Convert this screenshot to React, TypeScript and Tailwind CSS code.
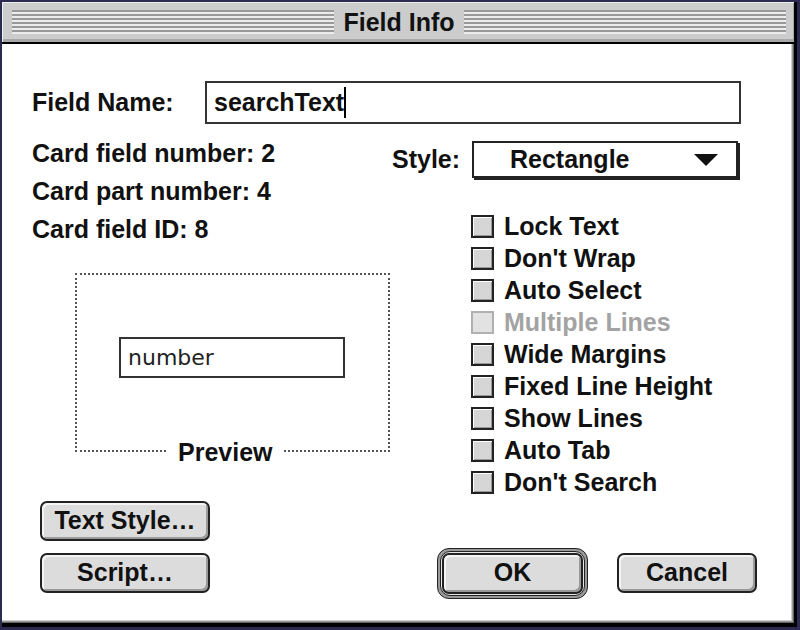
import React from 'react';

const checks = [
  { label: 'Lock Text' },
  { label: "Don't Wrap" },
  { label: 'Auto Select' },
  { label: 'Multiple Lines', disabled: true },
  { label: 'Wide Margins' },
  { label: 'Fixed Line Height' },
  { label: 'Show Lines' },
  { label: 'Auto Tab' },
  { label: "Don't Search" },
];

function Stripes() {
  return (
    <div className="flex-1 flex flex-col shadow-[inset_1px_1px_0_#f4f4f4]">
      {[0, 1, 2, 3, 4, 5].map(i => (
        <div key={i} className="h-[4px] border-t-2 border-[#999] bg-[#ececec]" />
      ))}
    </div>
  );
}

function MacButton({ label, className }: { label: string; className?: string }) {
  return (
    <div
      className={
        'flex items-center justify-center rounded-[7px] border-2 border-[#222] bg-[#dcdcdc] shadow-[inset_2px_2px_0_#f4f4f4,inset_-2px_-2px_0_#9a9a9a] ' +
        (className ?? '')
      }
    >
      {label}
    </div>
  );
}

function Checkbox({ label, disabled }: { label: string; disabled?: boolean }) {
  return (
    <div className="h-[32px] flex items-center gap-[10px]">
      {disabled ? (
        <div className="w-[23px] h-[23px] border-2 border-[#b0b0b0] bg-[#e2e2e2]" />
      ) : (
        <div className="w-[23px] h-[23px] border-2 border-[#222] bg-[#d6d6d6] shadow-[inset_1px_1px_0_#fff,inset_-1px_-1px_0_#999]" />
      )}
      <span className={disabled ? 'text-[#a3a3a3]' : ''}>{label}</span>
    </div>
  );
}

export default function App() {
  return (
    <div className="w-[800px] h-[630px] bg-[#2c2a50] pl-[2px] pt-[2px] pr-[3px] pb-[3px] font-['Liberation_Sans',Arial,sans-serif] font-bold text-[25px] text-[#111] overflow-hidden">
      <div className="h-full flex flex-col border-r-[3px] border-b-[4px] border-black">
        {/* title bar */}
        <div className="h-[42px] shrink-0 flex items-center pl-[10px] pr-[8px] bg-[#cccccc] border-b-2 border-black shadow-[inset_1px_1px_0_#eeeeee,inset_-1px_-3px_0_#a8a8a8]">
          <Stripes />
          <div className="px-[9px] leading-none">Field Info</div>
          <Stripes />
        </div>

        {/* content */}
        <div className="flex-1 bg-white pl-[30px] shadow-[inset_-1px_-1px_0_#666,inset_-2px_-2px_0_#999,inset_-3px_-3px_0_#cfcfcf]">
          <div className="mt-[37px] flex items-center">
            <div className="w-[173px]">Field Name:</div>
            <div className="w-[536px] h-[43px] border-2 border-[#333] flex items-center pl-[7px]">
              <span>searchText</span>
              <span className="w-[2px] h-[31px] bg-black" />
            </div>
          </div>

          <div className="mt-[10px] flex">
            {/* left column */}
            <div className="w-[360px] flex flex-col">
              <div className="leading-[38px]">Card field number: 2</div>
              <div className="leading-[38px]">Card part number: 4</div>
              <div className="leading-[38px]">Card field ID: 8</div>

              <div className="relative mt-[25px] ml-[43px] w-[315px] h-[179px] border-2 border-dotted border-[#555]">
                <div className="mt-[62px] ml-[42px] w-[226px] h-[41px] border-2 border-[#333] flex items-center pl-[7px] font-['DejaVu_Sans',Verdana,sans-serif] font-normal text-[22px] text-[#222]">
                  number
                </div>
                <div className="absolute left-[91px] bottom-[-16px] bg-white px-[10px] leading-[28px]">Preview</div>
              </div>

              <MacButton label="Text Style…" className="mt-[49px] ml-[8px] w-[170px] h-[40px]" />
              <MacButton label="Script…" className="mt-[12px] ml-[8px] w-[170px] h-[40px]" />
            </div>

            {/* right column */}
            <div className="flex flex-col">
              <div className="mt-[7px] flex items-center">
                <div className="w-[80px]">Style:</div>
                <div className="w-[266px] h-[37px] border-2 border-[#222] shadow-[2px_2px_0_#222] flex items-center pl-[36px] pr-[18px]">
                  <span className="flex-1">Rectangle</span>
                  <svg width="24" height="12" viewBox="0 0 24 12">
                    <path d="M0 0H24L12 12Z" fill="#111" />
                  </svg>
                </div>
              </div>

              <div className="mt-[32px] pl-[79px] flex flex-col">
                {checks.map(c => (
                  <Checkbox key={c.label} label={c.label} disabled={c.disabled} />
                ))}
              </div>

              <div className="mt-[49px] ml-[45px] flex items-center">
                <div className="w-[151px] h-[51px] rounded-[12px] border border-[#222] bg-[#9a9a9a] p-[2px]">
                  <div className="h-full rounded-[10px] border border-[#222] bg-[#e8e8e8] p-[1px]">
                    <MacButton label="OK" className="h-full" />
                  </div>
                </div>
                <MacButton label="Cancel" className="ml-[29px] w-[140px] h-[40px]" />
              </div>
            </div>
          </div>
        </div>
      </div>
    </div>
  );
}
